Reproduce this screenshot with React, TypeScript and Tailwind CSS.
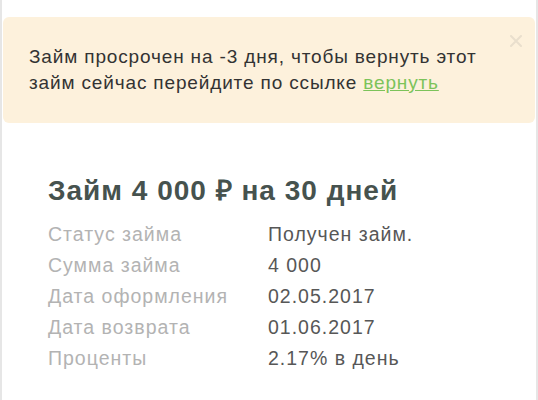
export default function App() {
  const rows = [
    ['Статус займа', 'Получен займ.'],
    ['Сумма займа', '4 000'],
    ['Дата оформления', '02.05.2017'],
    ['Дата возврата', '01.06.2017'],
    ['Проценты', '2.17% в день'],
  ]

  return (
    <div
      className="min-h-[400px] w-full bg-white border-x-2 border-[#e6e6e6] px-px pt-[17px]"
      style={{ fontFamily: '"Liberation Sans", Arial, sans-serif' }}
    >
      {/* Alert */}
      <div className="relative rounded-md bg-[#fdf1dc] pl-[26px] pr-10 pt-[27px] pb-[27px] text-[19px] leading-[26px] tracking-[0.85px] text-[#333]">
        <button className="absolute right-[11px] top-[16px] flex h-4 w-4 items-center justify-center">
          <svg width="12" height="12" viewBox="0 0 12 12" stroke="#e9dfcd" strokeWidth="2" strokeLinecap="round">
            <path d="M1 1l10 10M11 1L1 11" />
          </svg>
        </button>
        Займ просрочен на -3 дня, чтобы вернуть этот займ сейчас перейдите по ссылке{' '}
        <a href="#" className="text-[#7cc35a] underline">вернуть</a>
      </div>

      {/* Loan info */}
      <div className="pl-[45px] pt-[52px]">
        <h2 className="text-[28px] font-bold leading-[32px] tracking-[1px] text-[#46524e]">Займ 4 000 ₽ на 30 дней</h2>
        <div className="mt-[12px] flex flex-col text-[19.5px] leading-[31px] tracking-[1px]">
          {rows.map(([label, value]) => (
            <div key={label} className="flex">
              <span className="w-[220px] text-[#b3b3b3]">{label}</span>
              <span className="text-[#575757]">{value}</span>
            </div>
          ))}
        </div>
      </div>
    </div>
  )
}
